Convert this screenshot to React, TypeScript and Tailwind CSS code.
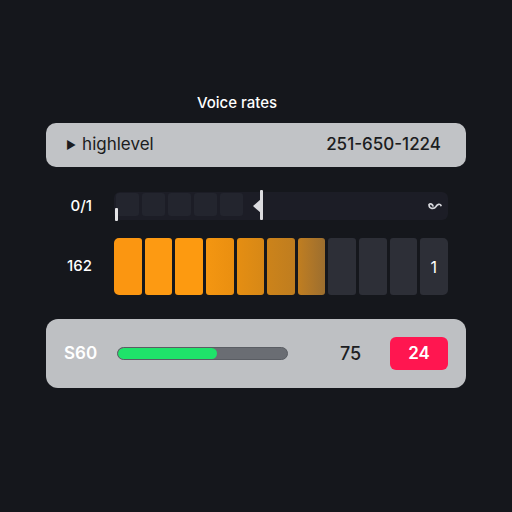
import React from 'react';

const font = { fontFamily: 'Inter, "Liberation Sans", sans-serif' };

// Colours of the level bar, from bright orange to the dimmed tail
const levelBars = [
  'bg-[#fb9611]',
  'bg-[#fd9a12]',
  'bg-[#fd9a10]',
  'bg-gradient-to-r from-[#f49611] to-[#ea8f10]',
  'bg-gradient-to-r from-[#e58e12] to-[#d78816]',
  'bg-gradient-to-r from-[#cc831a] to-[#bf7d1f]',
  'bg-gradient-to-r from-[#c07e20] to-[#9c6e2e]',
  'bg-[#2d2f37]',
  'bg-[#2d2f37]',
  'bg-[#2d2f37]',
  'bg-[#2d2f37]',
];

const LoopIcon: React.FC = () => (
  <svg width="16" height="12" viewBox="0 0 16 12" fill="none">
    <path
      d="M2 4.5 C 2 9, 7 9.5, 9 6.5 C 10.5 4, 13 3.5, 14 5.5 M2 4.5 C 3.5 3, 5.5 4.5, 6 6"
      stroke="#d6d7dc"
      strokeWidth="1.7"
      strokeLinecap="round"
    />
  </svg>
);

const App: React.FC = () => {
  return (
    <div className="w-[512px] h-[512px] bg-[#15171c] flex flex-col px-[46px] pt-[93px]" style={font}>
      <div className="h-[20px] text-center pr-[38px] text-[15px] leading-[20px] text-white font-medium">
        Voice rates
      </div>

      {/* line header */}
      <div className="mt-[10px] h-[44px] rounded-[10px] bg-[#c1c3c6] flex items-center justify-between pl-[20px] pr-[25px] text-[#1b1c20]">
        <div className="flex items-center gap-[6px] text-[17px]">
          <span className="text-[11px]">▶</span>
          <span>highlevel</span>
        </div>
        <span className="text-[17px] font-medium">251-650-1224</span>
      </div>

      {/* scrubber */}
      <div className="mt-[25px] h-[28px] flex items-center pr-[18px]">
        <div className="w-[68px] pr-[22px] text-right text-white text-[15px] font-medium">0/1</div>
        <div className="relative flex-1 h-full rounded-[6px] bg-[#1c1d26] flex gap-[3px] px-[2px] pt-[1px] pb-[4px]">
          {[0, 1, 2, 3, 4].map((i) => (
            <div key={i} className="w-[23px] h-full rounded-[3px] bg-[#23252e]" />
          ))}
          <div className="absolute left-[1px] top-[16px] w-[3px] h-[13px] rounded-[1px] bg-[#e4e4e6]" />
          <div className="absolute left-[146px] top-[-2px] w-[3px] h-[30px] rounded-[1px] bg-[#dcdcdf]" />
          <div className="absolute left-[139px] top-[7px] w-0 h-0 border-y-[7px] border-y-transparent border-r-[8px] border-r-[#dcdcdf]" />
          <div className="absolute right-[5px] top-[8px]">
            <LoopIcon />
          </div>
        </div>
      </div>

      {/* level bar */}
      <div className="mt-[18px] h-[57px] flex items-center pr-[18px]">
        <div className="w-[68px] pr-[22px] text-right text-white text-[15px] font-medium">162</div>
        <div className="flex-1 h-full flex gap-[3px]">
          {levelBars.map((c, i) => {
            const last = i === levelBars.length - 1;
            return (
              <div
                key={i}
                className={`flex-1 min-w-0 h-full rounded-[3px] ${c} ${i === 0 ? 'rounded-l-[5px]' : ''} ${
                  last ? 'rounded-r-[5px] flex items-center justify-end text-white text-[16px]' : ''
                }`}
              >
                {last ? <span className="mr-[11px]">1</span> : null}
              </div>
            );
          })}
        </div>
      </div>

      {/* summary */}
      <div className="mt-[24px] h-[69px] rounded-[12px] bg-[#bec0c3] flex items-center pl-[18px] pr-[18px]">
        <span className="w-[53px] text-white text-[17px] font-semibold">S60</span>
        <div className="w-[171px] h-[13px] rounded-full bg-[#6a6d73] border border-[#5a5d63] overflow-hidden">
          <div className="w-[99px] h-full rounded-full bg-[#1fe36a]" />
        </div>
        <span className="ml-[52px] text-[18px] text-[#1c1d22] font-medium">75</span>
        <div className="ml-auto w-[58px] h-[33px] rounded-[6px] bg-[#ff1650] flex items-center justify-center text-white text-[17px] font-semibold">
          24
        </div>
      </div>
    </div>
  );
};

export default App;
